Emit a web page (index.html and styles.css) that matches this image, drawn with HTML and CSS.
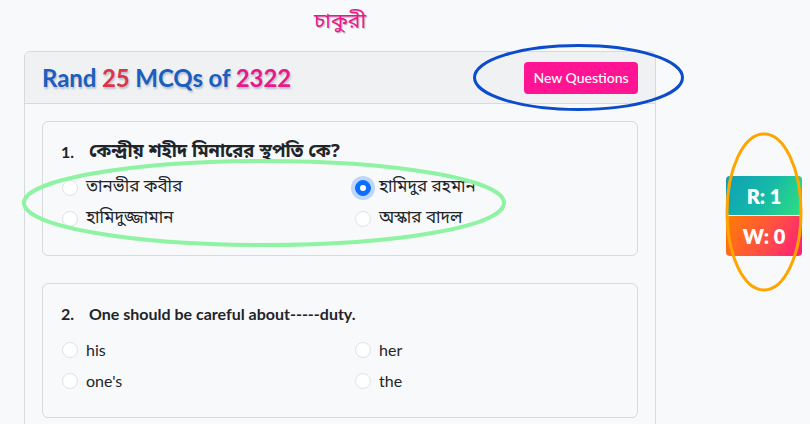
FILE: index.html
```html
<!DOCTYPE html>
<html lang="bn">
<head>
<meta charset="utf-8">
<title>চাকুরী</title>
<link rel="stylesheet" href="styles.css">
</head>
<body>
<div class="page">
  <h1 class="site-title">চাকুরী</h1>
  <div class="card">
    <div class="card-header">
      <h2 class="quiz-title"><span class="t-blue">Rand</span> <span class="t-red">25</span> <span class="t-blue">MCQs of</span> <span class="t-pink">2322</span></h2>
      <button class="btn-new">New Questions</button>
    </div>
    <div class="card-body">
      <div class="q-card">
        <div class="q-text bn"><span class="q-num">1.</span><span>কেন্দ্রীয় শহীদ মিনারের স্থপতি কে?</span></div>
        <div class="options bn">
          <label class="opt"><span class="radio"></span><span>তানভীর কবীর</span></label>
          <label class="opt"><span class="radio checked"></span><span>হামিদুর রহমান</span></label>
          <label class="opt"><span class="radio"></span><span>হামিদুজ্জামান</span></label>
          <label class="opt"><span class="radio"></span><span>অস্কার বাদল</span></label>
        </div>
      </div>
      <div class="q-card">
        <div class="q-text"><span class="q-num">2.</span><span>One should be careful about-----duty.</span></div>
        <div class="options">
          <label class="opt"><span class="radio"></span><span>his</span></label>
          <label class="opt"><span class="radio"></span><span>her</span></label>
          <label class="opt"><span class="radio"></span><span>one's</span></label>
          <label class="opt"><span class="radio"></span><span>the</span></label>
        </div>
      </div>
    </div>
  </div>
</div>
<div class="score">
  <div class="badge badge-r">R: 1</div>
  <div class="badge badge-w">W: 0</div>
</div>
<svg class="marks" width="810" height="424" viewBox="0 0 810 424">
  <ellipse cx="578.5" cy="77.5" rx="104" ry="32" fill="none" stroke="#0b4ccc" stroke-width="3"/>
  <ellipse cx="264" cy="203" rx="240" ry="42" fill="none" stroke="#8ef3a2" stroke-width="4"/>
  <ellipse cx="764" cy="212" rx="37" ry="78" fill="none" stroke="#ffa500" stroke-width="3"/>
</svg>
</body>
</html>
```
FILE: styles.css
```css
* { box-sizing: border-box; }
html, body { margin: 0; padding: 0; }
body {
  background: #f8f9fa;
  font-family: Lato, "Noto Sans", "Noto Sans Bengali", sans-serif;
  color: #212529;
  overflow: hidden;
  height: 424px;
}
.page {
  width: 632px;
  margin-left: 24px;
}
.site-title {
  margin: 0;
  height: 51px;
  padding-top: 7px;
  text-align: center;
  font-size: 21px;
  font-weight: 400;
  line-height: 26px;
  color: #e8198b;
  text-shadow: 1px 1px 1px #b9b9c4;
}
.card {
  background: #f8f9fa;
  border: 1px solid #d6d9dd;
  border-radius: 6px;
}
.card-header {
  height: 52px;
  background: #f0f1f3;
  border-bottom: 1px solid #d6d9dd;
  border-radius: 6px 6px 0 0;
  display: flex;
  align-items: center;
  justify-content: space-between;
  padding: 0 17px 0 17px;
}
.quiz-title {
  margin: 0;
  font-size: 24px;
  font-weight: 700;
  letter-spacing: -0.1px;
  text-shadow: 1px 2px 2px #b9c0cc;
}
.t-blue { color: #1a5fbf; }
.t-red { color: #dc3545; }
.t-pink { color: #e8198b; }
.btn-new {
  background: #ff1493;
  color: #fff;
  border: none;
  border-radius: 4px;
  height: 32px;
  width: 114px;
  font-family: Lato, "Noto Sans", sans-serif;
  font-size: 14px;
  font-weight: 500;
  padding: 0;
}
.card-body {
  padding: 17px 17px;
  display: flex;
  flex-direction: column;
  gap: 27px;
}
.q-card {
  border: 1px solid #d6d9dd;
  border-radius: 6px;
  background: #f8f9fa;
  padding: 20px 18px 22px 18px;
  height: 135px;
}
.q-text {
  display: flex;
  font-size: 16px;
  font-weight: 700;
  line-height: 20px;
  color: #212529;
}
.q-text.bn { font-size: 18.3px; }
.q-num { width: 28px; font-size: 16px; }
.options {
  display: grid;
  grid-template-columns: 293px 1fr;
  row-gap: 9px;
  margin-top: 15px;
  font-size: 16px;
  line-height: 22px;
  color: #212529;
}
.options.bn { font-size: 17px; }
.opt {
  display: flex;
  align-items: center;
  gap: 8px;
  padding-left: 1px;
}
.radio {
  width: 16px;
  height: 16px;
  border-radius: 50%;
  border: 1px solid #dfe2e6;
  background: #fff;
  flex: none;
}
.radio.checked {
  background: #0d6efd;
  border-color: #0d6efd;
  box-shadow: 0 0 0 4px rgba(13, 110, 253, 0.25);
  position: relative;
}
.radio.checked::after {
  content: "";
  position: absolute;
  left: 4px;
  top: 4px;
  width: 6px;
  height: 6px;
  border-radius: 50%;
  background: #fff;
}
.bn { font-family: "Noto Sans Bengali", "Noto Sans", sans-serif; }
.bn .q-num { font-family: Lato, sans-serif; }
.score {
  position: absolute;
  left: 726px;
  top: 176px;
  width: 76px;
  display: flex;
  flex-direction: column;
  gap: 1px;
}
.badge {
  height: 39px;
  border-radius: 4px;
  color: #fff;
  font-weight: 800;
  font-size: 20px;
  display: flex;
  align-items: center;
  justify-content: center;
}
.badge-r { background: linear-gradient(120deg, #0f9fb8 0%, #16b9a8 50%, #2fe07e 100%); }
.badge-w { background: linear-gradient(120deg, #ff7f00 0%, #ff4f45 55%, #ff1a7d 100%); height: 40px; }
.marks {
  position: absolute;
  left: 0;
  top: 0;
  pointer-events: none;
}
```
